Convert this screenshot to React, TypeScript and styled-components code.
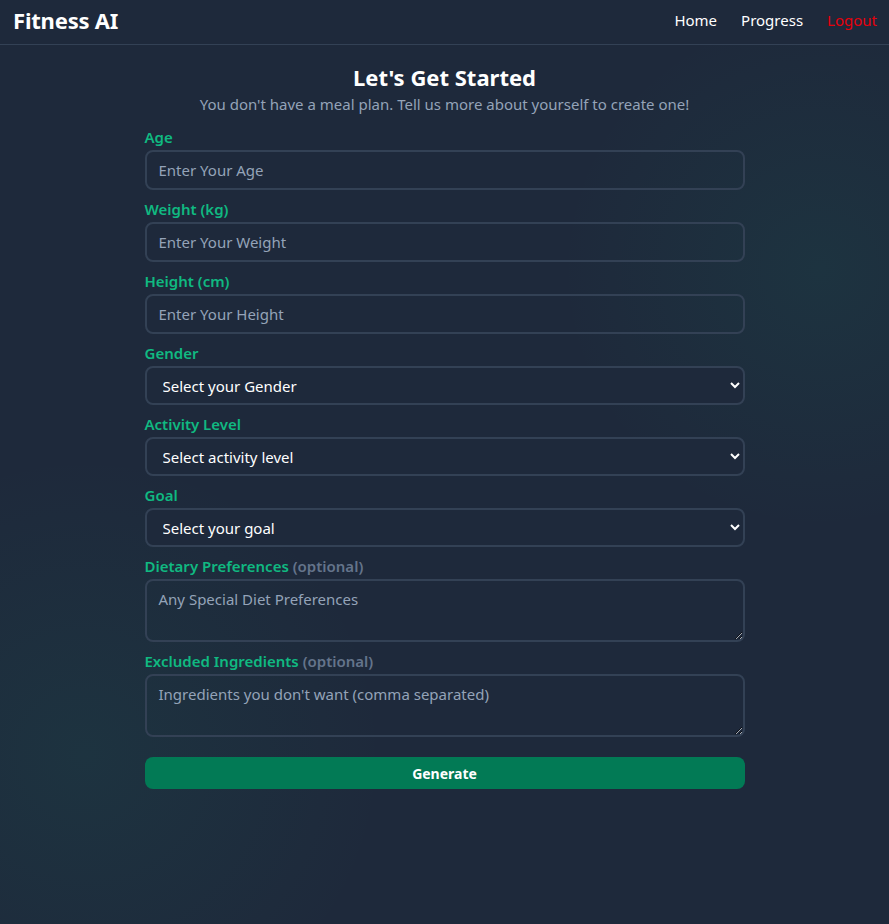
import { FC } from "react";
import styled, { createGlobalStyle } from "styled-components";

const FONT = `"Noto Sans", "Open Sans", "Liberation Sans", sans-serif`;

const GlobalStyle = createGlobalStyle`
  html, body {
    margin: 0;
    padding: 0;
  }
  body {
    min-height: 100vh;
    font-family: ${FONT};
    color: #ffffff;
    background-color: #1e293b;
    background-image:
      radial-gradient(circle at 820px 270px, rgba(16, 185, 129, 0.07) 0, rgba(16, 185, 129, 0) 260px),
      radial-gradient(circle at 85px 755px, rgba(16, 185, 129, 0.07) 0, rgba(16, 185, 129, 0) 300px);
    background-repeat: no-repeat;
  }
`;

const Page = styled.div`
  min-height: 100vh;
  display: flex;
  flex-direction: column;
`;

const NavBar = styled.nav`
  box-sizing: border-box;
  height: 45px;
  display: flex;
  align-items: center;
  justify-content: space-between;
  padding: 0 12px 4px 13px;
  background: #1e293b;
  border-bottom: 1px solid #334155;
`;

const Brand = styled.div`
  font-size: 22px;
  font-weight: 700;
  letter-spacing: -0.2px;
`;

const NavLinks = styled.div`
  display: flex;
  gap: 24px;
`;

const NavLink = styled.a<{ $danger?: boolean }>`
  font-size: 15px;
  color: ${(p) => (p.$danger ? "#e7000b" : "#ffffff")};
  text-decoration: none;
  cursor: pointer;
`;

const Main = styled.main`
  width: 600px;
  margin: 0 auto;
  padding-top: 16px;
`;

const Title = styled.h1`
  margin: 0;
  font-size: 22px;
  line-height: 32px;
  font-weight: 700;
  text-align: center;
`;

const Subtitle = styled.p`
  margin: -1px 0 9px;
  font-size: 15px;
  line-height: 24px;
  color: #94a3b8;
  text-align: center;
`;

const Form = styled.form`
  display: flex;
  flex-direction: column;
`;

const Field = styled.div`
  display: flex;
  flex-direction: column;
  margin-bottom: 7px;
`;

const Label = styled.label`
  font-size: 15px;
  line-height: 24px;
  font-weight: 600;
  color: #10b981;
  margin-bottom: 1px;
`;

const Optional = styled.span`
  color: #64748b;
`;

const controlBase = `
  box-sizing: border-box;
  width: 100%;
  font-family: ${FONT};
  font-size: 15px;
  line-height: 22px;
  color: #ffffff;
  background: transparent;
  border: 2px solid #334155;
  border-radius: 8px;
  padding: 7px 12px;
  outline: none;
  color-scheme: dark;
  &::placeholder {
    color: #94a3b8;
  }
`;

const Input = styled.input`
  ${controlBase}
  height: 40px;
`;

const Select = styled.select`
  ${controlBase}
  height: 39px;
  background: #1e293b;
  padding: 0 8px 0 12px;
`;

const TextArea = styled.textarea`
  ${controlBase}
  display: block;
  height: 63px;
  resize: vertical;
`;

const GenerateButton = styled.button`
  margin-top: 13px;
  height: 32px;
  border: none;
  border-radius: 8px;
  background: #027a55;
  color: #ffffff;
  font-family: ${FONT};
  font-size: 14px;
  font-weight: 700;
  cursor: pointer;
`;

const App: FC = () => {
  return (
    <>
      <GlobalStyle />
      <Page>
        <NavBar>
          <Brand>Fitness AI</Brand>
          <NavLinks>
            <NavLink>Home</NavLink>
            <NavLink>Progress</NavLink>
            <NavLink $danger>Logout</NavLink>
          </NavLinks>
        </NavBar>
        <Main>
          <Title>Let's Get Started</Title>
          <Subtitle>
            You don't have a meal plan. Tell us more about yourself to create one!
          </Subtitle>
          <Form onSubmit={(e) => e.preventDefault()}>
            <Field>
              <Label>Age</Label>
              <Input type="number" placeholder="Enter Your Age" />
            </Field>
            <Field>
              <Label>Weight (kg)</Label>
              <Input type="number" placeholder="Enter Your Weight" />
            </Field>
            <Field>
              <Label>Height (cm)</Label>
              <Input type="number" placeholder="Enter Your Height" />
            </Field>
            <Field>
              <Label>Gender</Label>
              <Select defaultValue="">
                <option value="">Select your Gender</option>
                <option value="male">Male</option>
                <option value="female">Female</option>
              </Select>
            </Field>
            <Field>
              <Label>Activity Level</Label>
              <Select defaultValue="">
                <option value="">Select activity level</option>
                <option value="low">Sedentary</option>
                <option value="mid">Moderate</option>
                <option value="high">Active</option>
              </Select>
            </Field>
            <Field>
              <Label>Goal</Label>
              <Select defaultValue="">
                <option value="">Select your goal</option>
                <option value="lose">Lose weight</option>
                <option value="keep">Maintain</option>
                <option value="gain">Gain muscle</option>
              </Select>
            </Field>
            <Field>
              <Label>
                Dietary Preferences <Optional>(optional)</Optional>
              </Label>
              <TextArea placeholder="Any Special Diet Preferences" />
            </Field>
            <Field>
              <Label>
                Excluded Ingredients <Optional>(optional)</Optional>
              </Label>
              <TextArea placeholder="Ingredients you don't want (comma separated)" />
            </Field>
            <GenerateButton type="submit">Generate</GenerateButton>
          </Form>
        </Main>
      </Page>
    </>
  );
};

export default App;
